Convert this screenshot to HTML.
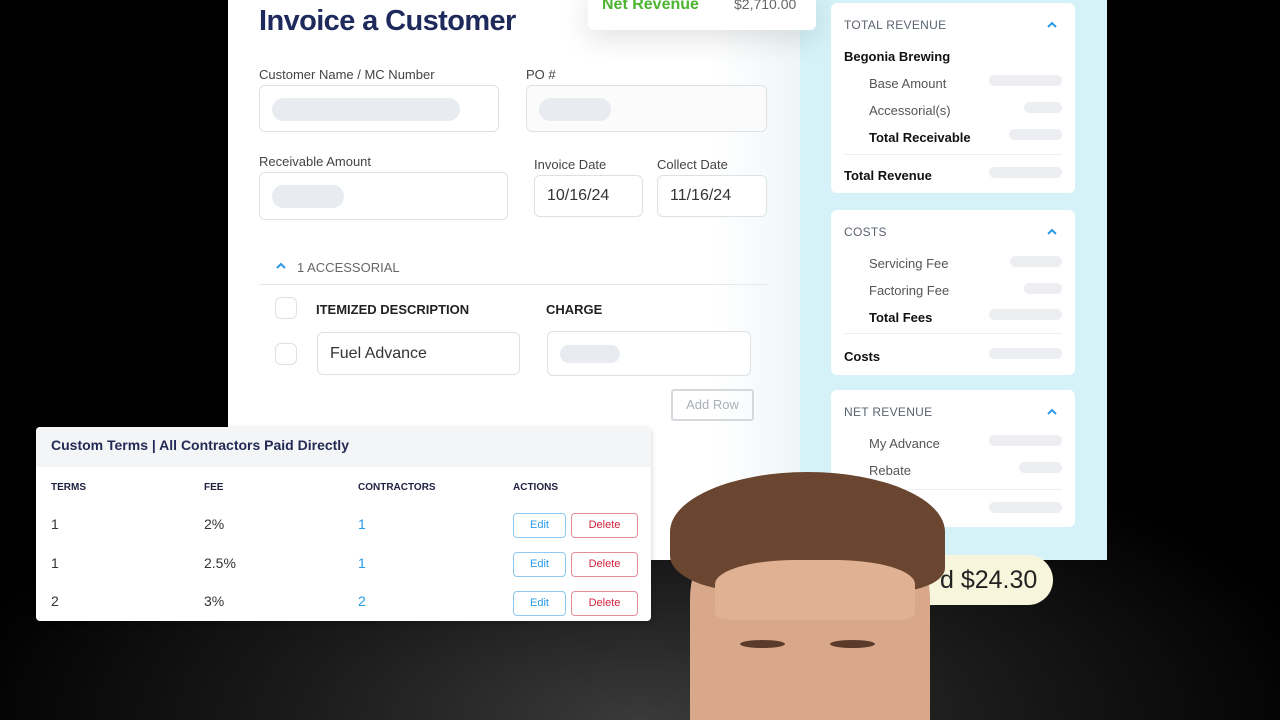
<!DOCTYPE html>
<html><head><style>
*{margin:0;padding:0;box-sizing:border-box}
html,body{width:1280px;height:720px;overflow:hidden}
body{background:radial-gradient(ellipse 700px 300px at 640px 720px,#3a3a3a 0%,#1a1a1a 50%,#000 100%);font-family:"Liberation Sans",sans-serif;position:relative}
.a{position:absolute}
.main{left:228px;top:0;width:572px;height:560px;background:linear-gradient(90deg,#fff 85%,#eef6f8)}
.blue{left:800px;top:0;width:307px;height:560px;background:#d5f2f8}
.lbl{font-size:13px;color:#444}
.inp{border:1px solid #dde1e6;border-radius:6px;background:#fff}
.sk{background:#e8ebef;border-radius:12px;position:absolute}
.card{background:#fff;border-radius:6px;left:831px;width:244px}
.ct{font-size:12px;color:#5a6370;letter-spacing:.3px}
.r{font-size:13px;color:#555}
.b{font-size:13px;color:#111;font-weight:bold}
.car{width:12px;height:8px}
.bar{background:#eceef1;border-radius:8px;height:11px;position:absolute}
.tbl{left:36px;top:427px;width:615px;height:194px;background:#fff;border-radius:4px;box-shadow:0 2px 6px rgba(0,0,0,.2)}
.th{font-size:10px;font-weight:bold;color:#1e2140}
.td{font-size:14px;color:#333}
.btn{position:absolute;height:25px;border-radius:4px;font-size:11px;text-align:center;line-height:23px}
.e{border:1px solid #8ccaf2;color:#2b9be6;width:53px;left:477px}
.d{border:1px solid #e58a97;color:#d0233d;width:67px;left:535px}
</style></head><body>
<div class="a main"></div>
<div class="a blue"></div>
<div class="a" style="left:259px;top:5px;font-size:29px;font-weight:bold;color:#1f2a5c;letter-spacing:-.6px">Invoice a Customer</div>
<div class="a" style="left:588px;top:-10px;width:228px;height:40px;background:#fff;border-radius:6px;box-shadow:0 8px 30px rgba(0,0,0,.12)"></div>
<div class="a" style="left:602px;top:-4px;font-size:16px;font-weight:bold;color:#4cb52f">Net Revenue</div>
<div class="a" style="left:734px;top:-4px;font-size:14px;color:#666">$2,710.00</div>
<div class="a lbl" style="left:259px;top:67px">Customer Name / MC Number</div>
<div class="a lbl" style="left:526px;top:67px">PO #</div>
<div class="a inp" style="left:259px;top:85px;width:240px;height:47px"><div class="sk" style="left:12px;top:12px;width:188px;height:23px"></div></div>
<div class="a inp" style="left:526px;top:85px;width:241px;height:47px;background:#fbfbfc"><div class="sk" style="left:12px;top:12px;width:72px;height:23px"></div></div>
<div class="a lbl" style="left:259px;top:154px">Receivable Amount</div>
<div class="a lbl" style="left:534px;top:157px">Invoice Date</div>
<div class="a lbl" style="left:657px;top:157px">Collect Date</div>
<div class="a inp" style="left:259px;top:172px;width:249px;height:48px"><div class="sk" style="left:12px;top:12px;width:72px;height:23px"></div></div>
<div class="a inp" style="left:534px;top:175px;width:109px;height:42px;font-size:16px;color:#333;padding:11px 12px">10/16/24</div>
<div class="a inp" style="left:657px;top:175px;width:110px;height:42px;font-size:16px;color:#333;padding:11px 12px">11/16/24</div>
<svg class="a car" style="left:275px;top:262px" viewBox="0 0 12 8"><path d="M2 6L6 2L10 6" fill="none" stroke="#2b9be6" stroke-width="2"/></svg>
<div class="a" style="left:297px;top:260px;font-size:13px;color:#666">1 ACCESSORIAL</div>
<div class="a" style="left:259px;top:284px;width:509px;height:1px;background:#e6e8eb"></div>
<div class="a inp" style="left:275px;top:297px;width:22px;height:22px"></div>
<div class="a" style="left:316px;top:302px;font-size:13px;font-weight:bold;color:#222">ITEMIZED DESCRIPTION</div>
<div class="a" style="left:546px;top:302px;font-size:13px;font-weight:bold;color:#222">CHARGE</div>
<div class="a inp" style="left:275px;top:343px;width:22px;height:22px"></div>
<div class="a inp" style="left:317px;top:332px;width:203px;height:43px;font-size:16px;color:#333;padding:12px 12px">Fuel Advance</div>
<div class="a inp" style="left:547px;top:331px;width:204px;height:45px"><div class="sk" style="left:12px;top:13px;width:60px;height:18px"></div></div>
<div class="a" style="left:671px;top:389px;width:83px;height:32px;border:2px solid #d5d8dd;border-radius:3px;font-size:13px;color:#aab0b8;text-align:center;line-height:28px">Add Row</div>

<div class="a card" style="top:3px;height:190px"></div>
<div class="a ct" style="left:844px;top:18px">TOTAL REVENUE</div><svg class="a car" style="left:1046px;top:21px" viewBox="0 0 12 8"><path d="M2 6L6 2L10 6" fill="none" stroke="#2b9be6" stroke-width="2"/></svg>
<div class="a b" style="left:844px;top:49px">Begonia Brewing</div>
<div class="a r" style="left:869px;top:76px">Base Amount</div><div class="bar" style="left:989px;top:75px;width:73px"></div>
<div class="a r" style="left:869px;top:103px">Accessorial(s)</div><div class="bar" style="left:1024px;top:102px;width:38px"></div>
<div class="a b" style="left:869px;top:130px">Total Receivable</div><div class="bar" style="left:1009px;top:129px;width:53px"></div>
<div class="a" style="left:844px;top:154px;width:218px;height:1px;background:#eee"></div>
<div class="a b" style="left:844px;top:168px">Total Revenue</div><div class="bar" style="left:989px;top:167px;width:73px"></div>

<div class="a card" style="top:210px;height:165px"></div>
<div class="a ct" style="left:844px;top:225px">COSTS</div><svg class="a car" style="left:1046px;top:228px" viewBox="0 0 12 8"><path d="M2 6L6 2L10 6" fill="none" stroke="#2b9be6" stroke-width="2"/></svg>
<div class="a r" style="left:869px;top:256px">Servicing Fee</div><div class="bar" style="left:1010px;top:256px;width:52px"></div>
<div class="a r" style="left:869px;top:283px">Factoring Fee</div><div class="bar" style="left:1024px;top:283px;width:38px"></div>
<div class="a b" style="left:869px;top:310px">Total Fees</div><div class="bar" style="left:989px;top:309px;width:73px"></div>
<div class="a" style="left:844px;top:333px;width:218px;height:1px;background:#eee"></div>
<div class="a b" style="left:844px;top:349px">Costs</div><div class="bar" style="left:989px;top:348px;width:73px"></div>

<div class="a card" style="top:390px;height:137px"></div>
<div class="a ct" style="left:844px;top:405px">NET REVENUE</div><svg class="a car" style="left:1046px;top:408px" viewBox="0 0 12 8"><path d="M2 6L6 2L10 6" fill="none" stroke="#2b9be6" stroke-width="2"/></svg>
<div class="a r" style="left:869px;top:436px">My Advance</div><div class="bar" style="left:989px;top:435px;width:73px"></div>
<div class="a r" style="left:869px;top:463px">Rebate</div><div class="bar" style="left:1019px;top:462px;width:43px"></div>
<div class="a" style="left:844px;top:489px;width:218px;height:1px;background:#eee"></div>
<div class="a b" style="left:844px;top:502px">Net Revenue</div><div class="bar" style="left:989px;top:502px;width:73px"></div>

<div class="a" style="left:900px;top:555px;width:153px;height:50px;background:#f7f6dc;border-radius:25px;font-size:25px;color:#222;line-height:50px;padding-left:40px">d $24.30</div>

<div class="a tbl">
<div style="height:40px;background:#f4f5f7;border-radius:4px 4px 0 0;padding:10px 15px;font-size:14px;font-weight:bold;color:#232a55">Custom Terms | All Contractors Paid Directly</div>
<div class="a th" style="left:15px;top:55px">TERMS</div><div class="a th" style="left:168px;top:55px">FEE</div><div class="a th" style="left:322px;top:55px">CONTRACTORS</div><div class="a th" style="left:477px;top:55px">ACTIONS</div>
<div class="a td" style="left:15px;top:89px">1</div><div class="a td" style="left:168px;top:89px">2%</div><div class="a td" style="left:322px;top:89px;color:#2b9be6">1</div>
<div class="btn e" style="top:86px">Edit</div><div class="btn d" style="top:86px">Delete</div>
<div class="a td" style="left:15px;top:128px">1</div><div class="a td" style="left:168px;top:128px">2.5%</div><div class="a td" style="left:322px;top:128px;color:#2b9be6">1</div>
<div class="btn e" style="top:125px">Edit</div><div class="btn d" style="top:125px">Delete</div>
<div class="a td" style="left:15px;top:166px">2</div><div class="a td" style="left:168px;top:166px">3%</div><div class="a td" style="left:322px;top:166px;color:#2b9be6">2</div>
<div class="btn e" style="top:164px">Edit</div><div class="btn d" style="top:164px">Delete</div>
</div>

<div class="a" style="left:690px;top:500px;width:240px;height:220px;background:#d9a88a;border-radius:45% 45% 0 0"></div>
<div class="a" style="left:670px;top:472px;width:275px;height:120px;background:#6a4630;border-radius:50% 50% 20% 30%"></div>
<div class="a" style="left:715px;top:560px;width:200px;height:60px;background:#e0b192;border-radius:40% 40% 10% 10%"></div>
<div class="a" style="left:740px;top:640px;width:45px;height:8px;background:#5a3a2a;border-radius:50%"></div>
<div class="a" style="left:830px;top:640px;width:45px;height:8px;background:#5a3a2a;border-radius:50%"></div>
</body></html>
